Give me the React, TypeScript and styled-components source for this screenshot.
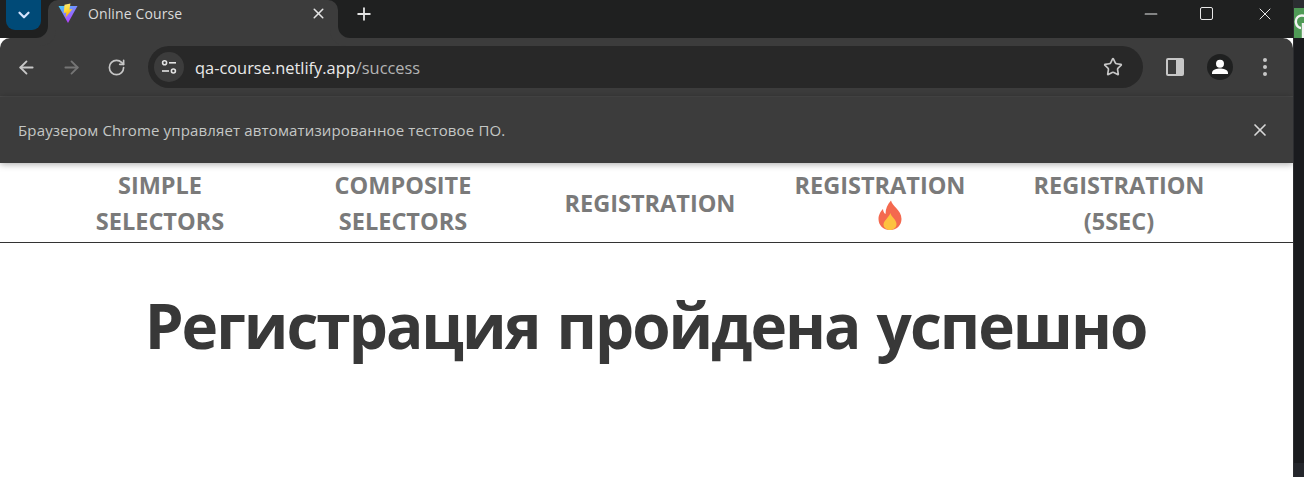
import React, { FunctionComponent, ReactElement } from 'react';
import styled, { createGlobalStyle } from 'styled-components';
import { ArrowLeft, ArrowRight, ChevronDown, Minus, Plus, RotateCw, Star, X } from 'lucide-react';

const GlobalStyle = createGlobalStyle`
    html, body {
        margin: 0;
        height: 100%;
        overflow: hidden;
        background: #fff;
    }
    #root {
        height: 100%;
    }
`;

const Page = styled.div`
    display: flex;
    height: 477px;
    width: 1304px;
    font-family: "Open Sans", "Noto Sans", sans-serif;
`;

const Browser = styled.div`
    display: flex;
    flex-direction: column;
    flex: 0 0 1293px;
    background: #fff;
    overflow: hidden;
`;

const DesktopStrip = styled.div`
    flex: 1;
    display: flex;
    flex-direction: column;
    background: #1a1b1e;
    border-left: 1px solid #2c2d30;
`;

const StripCap = styled.div`
    height: 8px;
    background: #2b2d31;
`;

const StripGreen = styled.div`
    height: 30px;
    background: #4f9a56;
    overflow: hidden;
    display: flex;
    align-items: center;
`;

const StripFill = styled.div`
    flex: 1;
`;

const StripFoot = styled.div`
    height: 14px;
    background: #24262b;
`;

const TabStrip = styled.div`
    display: flex;
    align-items: flex-start;
    height: 38px;
    background: #1f2020;
`;

const TabSearch = styled.div`
    display: flex;
    align-items: center;
    justify-content: center;
    width: 35px;
    height: 30px;
    margin-left: 6px;
    border-radius: 0 0 9px 9px;
    background: #004a77;
    color: #d3e3fd;
`;

const Tab = styled.div`
    position: relative;
    display: flex;
    align-items: center;
    width: 290px;
    height: 38px;
    margin-left: 7px;
    padding: 0 11px 12px 10px;
    box-sizing: border-box;
    background: #3c3c3c;
    border-radius: 10px 10px 0 0;

    &::before,
    &::after {
        content: '';
        position: absolute;
        bottom: 0;
        width: 12px;
        height: 12px;
        background: transparent;
    }
    &::before {
        left: -12px;
        border-bottom-right-radius: 12px;
        box-shadow: 4px 4px 0 4px #3c3c3c;
    }
    &::after {
        right: -12px;
        border-bottom-left-radius: 12px;
        box-shadow: -4px 4px 0 4px #3c3c3c;
    }
`;

const TabTitle = styled.span`
    flex: 1;
    margin-left: 10px;
    font-size: 14px;
    color: #dadada;
    white-space: nowrap;
    letter-spacing: 0.12px;
`;

const TabClose = styled.span`
    display: flex;
    color: #e3e3e3;
`;

const NewTab = styled.span`
    display: flex;
    margin: 4px 0 0 16px;
    color: #e3e3e3;
`;

const WindowControls = styled.div`
    display: flex;
    margin-left: auto;
    height: 27px;
    align-items: center;
    padding-right: 18px;
    color: #e8e8e8;
    gap: 37px;
`;

const WindowButton = styled.span`
    display: flex;
    width: 20px;
    justify-content: center;
`;

const MaxIcon = styled.span`
    flex: none;
    width: 11px;
    height: 11px;
    margin-right: 3px;
    border: 1px solid #e8e8e8;
    border-radius: 2px;
`;

const Toolbar = styled.div`
    display: flex;
    align-items: center;
    height: 59px;
    padding: 0 18px 0 14px;
    box-sizing: border-box;
    background: #3c3c3c;
    border-top-left-radius: 10px;
    border-top-right-radius: 10px;
    border-bottom: 1px solid #4a4a4a;
`;

const NavIcon = styled.span<{ $dim?: boolean }>`
    display: flex;
    width: 24px;
    justify-content: center;
    margin-right: 21px;
    color: ${({ $dim }) => ($dim ? '#757575' : '#c7c7c7')};
`;

const Omnibox = styled.div`
    display: flex;
    align-items: center;
    flex: 0 0 995px;
    height: 42px;
    margin-left: -1px;
    padding: 0 20px 0 6px;
    box-sizing: border-box;
    border-radius: 21px;
    background: #282828;
`;

const SiteChip = styled.span`
    display: flex;
    align-items: center;
    justify-content: center;
    width: 30px;
    height: 30px;
    border-radius: 50%;
    background: #3c3c3c;
    color: #e3e3e3;
`;

const Url = styled.span`
    flex: 1;
    margin-left: 11px;
    font-size: 16.4px;
    color: #eaeaea;
`;

const UrlPath = styled.span`
    color: #b4b4b4;
`;

const ToolIcons = styled.div`
    display: flex;
    align-items: center;
    margin-left: 23px;
    gap: 23px;
    color: #c7c7c7;
`;

const Avatar = styled.span`
    display: flex;
    width: 26px;
    height: 26px;
    border-radius: 50%;
    overflow: hidden;
    background: #1f2020;
`;

const InfoBar = styled.div`
    position: relative;
    display: flex;
    align-items: center;
    justify-content: space-between;
    height: 66px;
    padding: 0 23px 0 18px;
    box-sizing: border-box;
    background: #3c3c3c;
    box-shadow: 0 1px 7px rgba(0, 0, 0, 0.35);
    color: #c4c7c5;
    font-size: 15px;
    letter-spacing: 0.15px;
`;

const InfoClose = styled.span`
    display: flex;
    color: #d8d8d8;
`;

const NavBar = styled.nav`
    display: grid;
    grid-template-columns: 242px 244px 250px 210px 268px;
    height: 80px;
    padding-left: 39px;
    box-sizing: border-box;
    border-bottom: 1px solid #333;
`;

const NavItem = styled.a`
    display: flex;
    flex-direction: column;
    align-items: center;
    justify-content: center;
    font-size: 23.5px;
    font-weight: 700;
    line-height: 36px;
    color: #7a7a7a;
    text-align: center;
`;

const FlameLine = styled.span`
    display: flex;
    height: 36px;
    align-items: flex-start;

    svg {
        margin: -3px 0 0 20px;
    }
`;

const Heading = styled.h1`
    margin: 43px 0 0;
    padding-right: 2px;
    font-size: 62px;
    font-weight: 700;
    line-height: 78px;
    color: #383838;
    text-align: center;
    letter-spacing: -2px;
    word-spacing: 3px;
`;

const ViteLogo: FunctionComponent = (): ReactElement => (
    <svg width="20" height="20" viewBox="0 0 20 20">
        <defs>
            <linearGradient id="viteBody" x1="0" y1="0" x2="0.6" y2="1">
                <stop offset="0" stopColor="#41d1ff" />
                <stop offset="1" stopColor="#bd34fe" />
            </linearGradient>
            <linearGradient id="viteBolt" x1="0" y1="0" x2="0.3" y2="1">
                <stop offset="0" stopColor="#ffea83" />
                <stop offset="0.5" stopColor="#ffdd35" />
                <stop offset="1" stopColor="#ffa800" />
            </linearGradient>
        </defs>
        <path d="M0.5 3 L19.5 3 L10 20 Z" fill="url(#viteBody)" />
        <path d="M12.5 0.5 L6.5 1.8 L5.8 10 L8.4 9.6 L7.6 14.5 L14.5 6 L11.4 6.4 Z" fill="url(#viteBolt)" />
    </svg>
);

const SiteInfoIcon: FunctionComponent = (): ReactElement => (
    <svg width="16" height="16" viewBox="0 0 16 16" fill="none" stroke="currentColor" strokeWidth="1.6">
        <circle cx="3.6" cy="3.8" r="2" />
        <path d="M8 3.8 H15" />
        <circle cx="12.4" cy="12" r="2" />
        <path d="M1 12 H8" />
    </svg>
);

const SidePanelIcon: FunctionComponent = (): ReactElement => (
    <svg width="18" height="18" viewBox="0 0 18 18">
        <rect x="0" y="0" width="18" height="18" rx="2" fill="#c7c7c7" />
        <rect x="2" y="2" width="8" height="14" fill="#3c3c3c" />
    </svg>
);

const ProfileIcon: FunctionComponent = (): ReactElement => (
    <svg width="26" height="26" viewBox="0 0 26 26" fill="#fff">
        <circle cx="13" cy="9.8" r="4" />
        <path d="M5 19 C5 15.5 10 14.6 13 14.6 C16 14.6 21 15.5 21 19 L21 20 L5 20 Z" />
    </svg>
);

const MenuIcon: FunctionComponent = (): ReactElement => (
    <svg width="18" height="20" viewBox="0 0 18 20" fill="#c7c7c7">
        <circle cx="9" cy="3" r="2" />
        <circle cx="9" cy="10" r="2" />
        <circle cx="9" cy="17" r="2" />
    </svg>
);

const FlameIcon: FunctionComponent = (): ReactElement => (
    <svg width="24" height="30" viewBox="0 0 24 30">
        <path
            d="M13 0.5 C14 6 23.5 10 23.5 19 C23.5 25.5 18.5 30 12 30 C5.5 30 0.5 25.5 0.5 19 C0.5 14.5 3 11 5 9 C5.2 11.5 6 13 7.5 14 C7.5 9 9.5 4 13 0.5 Z"
            fill="#f4694f"
        />
        <path
            d="M12.5 13 C13 17 18.5 19.5 18.5 24 C18.5 27.5 15.5 30 12 30 C8.5 30 5.5 27.5 5.5 24.5 C5.5 20.5 10.5 18 12.5 13 Z"
            fill="#fdc23f"
        />
    </svg>
);

export default function App(): ReactElement {
    return (
        <Page>
            <GlobalStyle />
            <Browser>
                <TabStrip>
                    <TabSearch>
                        <ChevronDown size={18} strokeWidth={3} />
                    </TabSearch>
                    <Tab>
                        <ViteLogo />
                        <TabTitle>Online Course</TabTitle>
                        <TabClose>
                            <X size={17} strokeWidth={2.2} />
                        </TabClose>
                    </Tab>
                    <NewTab>
                        <Plus size={20} strokeWidth={2.2} />
                    </NewTab>
                    <WindowControls>
                        <WindowButton>
                            <Minus size={22} strokeWidth={1.3} />
                        </WindowButton>
                        <WindowButton>
                            <MaxIcon />
                        </WindowButton>
                        <WindowButton>
                            <X size={26} strokeWidth={1.2} />
                        </WindowButton>
                    </WindowControls>
                </TabStrip>
                <Toolbar>
                    <NavIcon>
                        <ArrowLeft size={21} strokeWidth={2.1} />
                    </NavIcon>
                    <NavIcon $dim>
                        <ArrowRight size={21} strokeWidth={2.1} />
                    </NavIcon>
                    <NavIcon>
                        <RotateCw size={19} strokeWidth={2.1} />
                    </NavIcon>
                    <Omnibox>
                        <SiteChip>
                            <SiteInfoIcon />
                        </SiteChip>
                        <Url>
                            qa-course.netlify.app<UrlPath>/success</UrlPath>
                        </Url>
                        <Star size={20} strokeWidth={2} color="#c7c7c7" />
                    </Omnibox>
                    <ToolIcons>
                        <SidePanelIcon />
                        <Avatar>
                            <ProfileIcon />
                        </Avatar>
                        <MenuIcon />
                    </ToolIcons>
                </Toolbar>
                <InfoBar>
                    <span>Браузером Chrome управляет автоматизированное тестовое ПО.</span>
                    <InfoClose>
                        <X size={20} strokeWidth={2} />
                    </InfoClose>
                </InfoBar>
                <NavBar>
                    <NavItem>
                        <span>SIMPLE</span>
                        <span>SELECTORS</span>
                    </NavItem>
                    <NavItem>
                        <span>COMPOSITE</span>
                        <span>SELECTORS</span>
                    </NavItem>
                    <NavItem>REGISTRATION</NavItem>
                    <NavItem>
                        <span>REGISTRATION</span>
                        <FlameLine>
                            <FlameIcon />
                        </FlameLine>
                    </NavItem>
                    <NavItem>
                        <span>REGISTRATION</span>
                        <span>(5SEC)</span>
                    </NavItem>
                </NavBar>
                <Heading>Регистрация пройдена успешно</Heading>
            </Browser>
            <DesktopStrip>
                <StripCap />
                <StripGreen>
                    <svg width="11" height="30" viewBox="0 0 11 30" fill="none" stroke="#f2f2f2" strokeWidth="2.4">
                        <path d="M11 8 C5 6 1 10 2 15 C2.5 18 5 20 7 20" />
                        <path d="M9 15 V30" />
                    </svg>
                </StripGreen>
                <StripFill />
                <StripFoot />
            </DesktopStrip>
        </Page>
    );
}
